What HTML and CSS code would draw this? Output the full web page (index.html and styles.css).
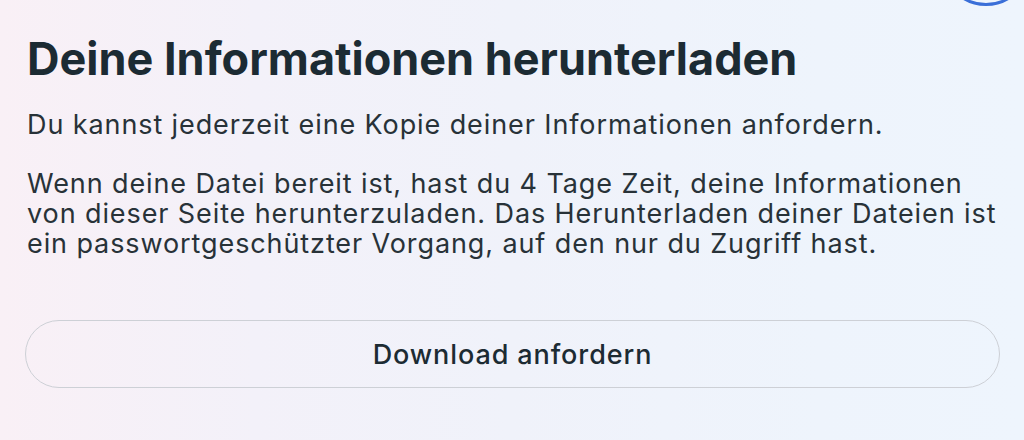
FILE: index.html
```html
<!DOCTYPE html>
<html lang="de">
<head>
<meta charset="utf-8">
<title>Deine Informationen herunterladen</title>
<link rel="stylesheet" href="styles.css">
</head>
<body>
<div class="page">
  <span class="avatar-ring" aria-hidden="true"></span>
  <main class="content">
    <h1 class="title">Deine Informationen herunterladen</h1>
    <p class="text">Du kannst jederzeit eine Kopie deiner Informationen anfordern.</p>
    <p class="text">Wenn deine Datei bereit ist, hast du 4 Tage Zeit, deine Informationen von dieser Seite herunterzuladen. Das Herunterladen deiner Dateien ist ein passwortgeschützter Vorgang, auf den nur du Zugriff hast.</p>
    <button class="btn" type="button">Download anfordern</button>
  </main>
</div>
</body>
</html>
```
FILE: styles.css
```css
html, body {
  margin: 0;
  padding: 0;
}
body {
  width: 1024px;
  height: 440px;
  overflow: hidden;
  font-family: Inter, "Noto Sans", sans-serif;
  color: #1c2b33;
  background: linear-gradient(90deg, #f9f0f6 0%, #f3f1f9 25%, #f0f2fa 50%, #eef4fc 80%, #eef5fd 100%);
}
.page {
  position: relative;
  width: 1024px;
  height: 440px;
}
.avatar-ring {
  position: absolute;
  left: 941px;
  top: -84px;
  width: 84px;
  height: 84px;
  border: 3px solid #3a6fd8;
  border-radius: 50%;
}
.content {
  width: 975px;
  padding: 33px 0 0 27px;
  display: flex;
  flex-direction: column;
}
.title {
  margin: 0 0 25px;
  font-size: 45px;
  line-height: 52px;
  font-weight: 700;
  color: #1c2b33;
}
.text {
  margin: 0 0 29px;
  font-size: 27px;
  line-height: 30px;
  font-weight: 400;
  letter-spacing: 0.9px;
  color: #283238;
}
.text:last-of-type {
  margin-bottom: 0;
}
.btn {
  margin-top: 61px;
  margin-left: -2px;
  width: 975px;
  height: 68px;
  border: 1.5px solid #cdd0d6;
  border-radius: 34px;
  background: transparent;
  font-family: Inter, "Noto Sans", sans-serif;
  font-size: 27px;
  font-weight: 500;
  letter-spacing: 0.9px;
  color: #1c2b33;
  cursor: pointer;
}
```
